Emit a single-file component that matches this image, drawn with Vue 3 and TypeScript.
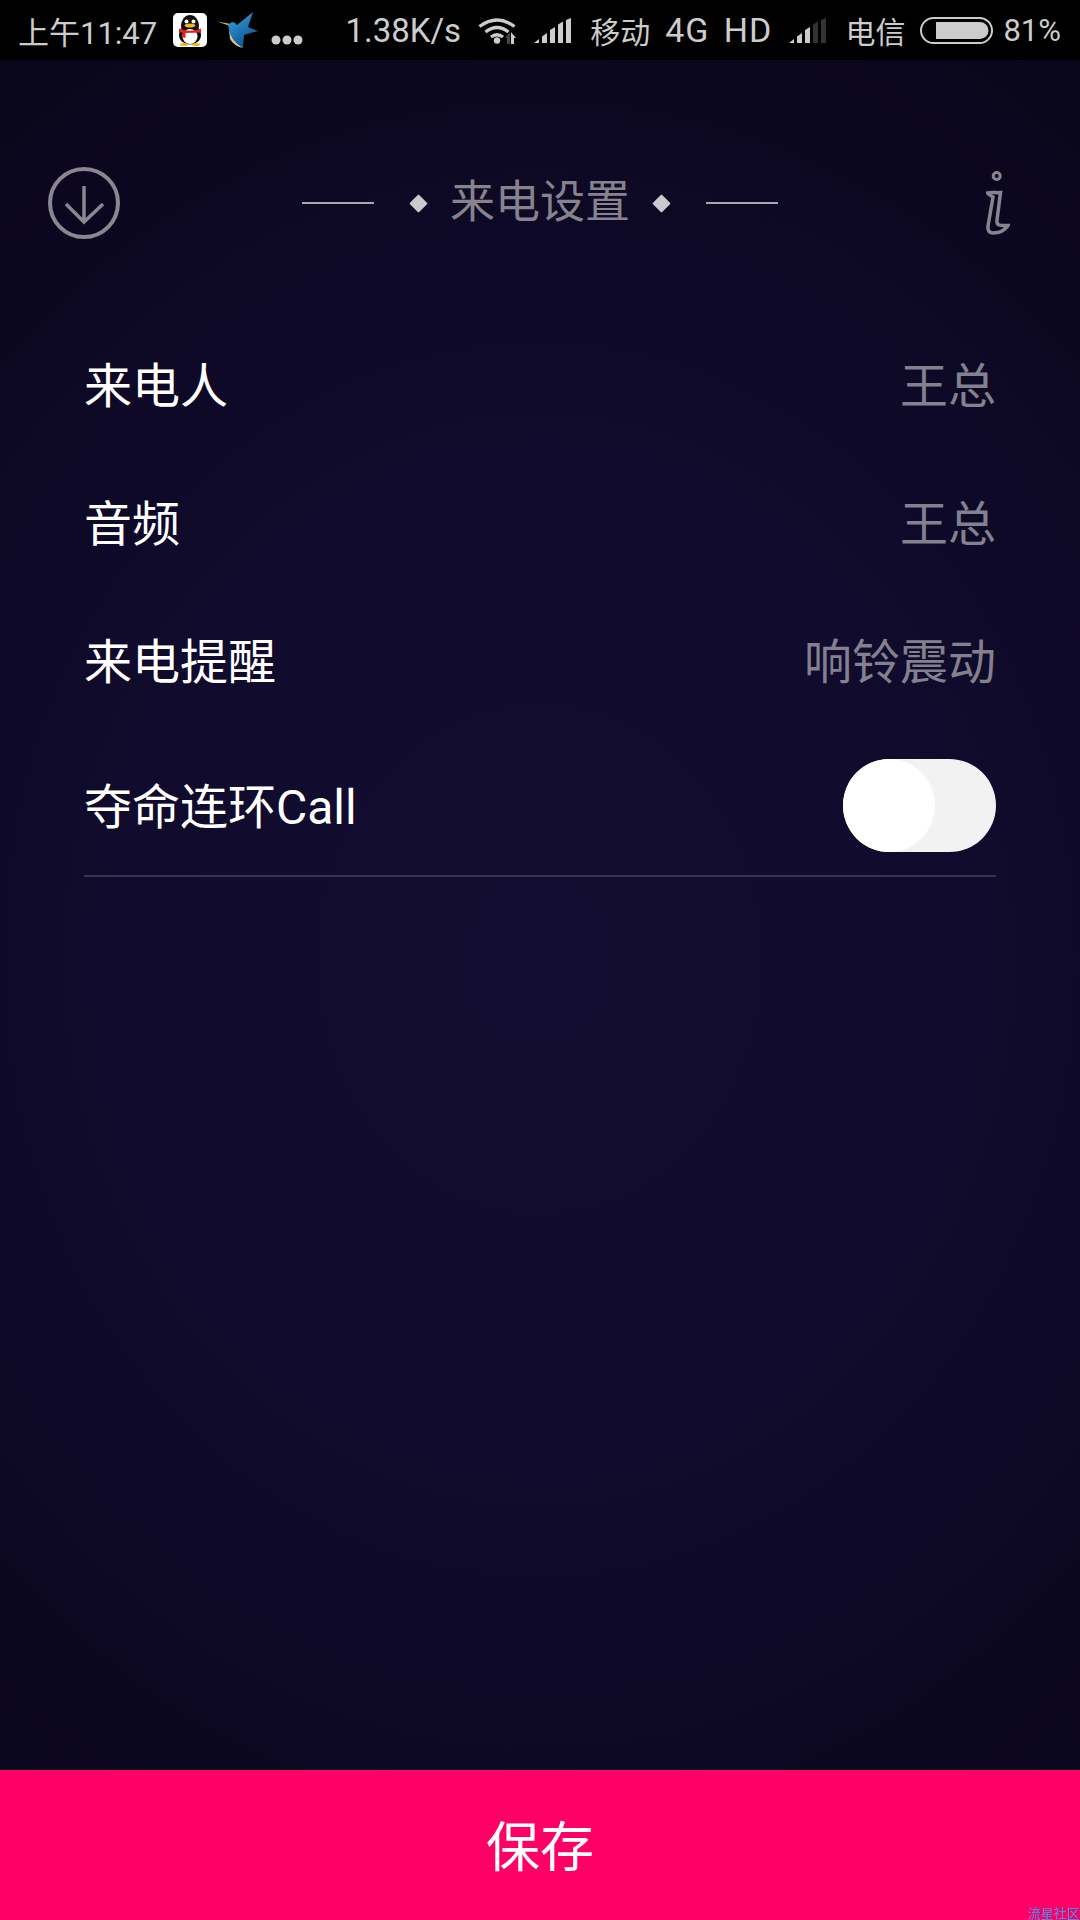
<template>
  <div class="page">
    <div class="status-bar">
      <div class="status-left">
        <span class="time">上午11:47</span>
        <svg class="qq" width="34" height="34" viewBox="0 0 34 34">
          <rect width="34" height="34" rx="5" fill="#fff" />
          <ellipse cx="17" cy="13" rx="9" ry="11" fill="#0c0c0c" />
          <ellipse cx="17" cy="22" rx="11" ry="9.5" fill="#0c0c0c" />
          <ellipse cx="17" cy="23.5" rx="7.5" ry="7.5" fill="#fff" />
          <circle cx="13.5" cy="8.5" r="2" fill="#fff" />
          <circle cx="20.5" cy="8.5" r="2" fill="#fff" />
          <ellipse cx="17" cy="12.5" rx="5.5" ry="2" fill="#f5b51c" />
          <path d="M6 15.5 Q17 20 28 15.5 L28 19.5 L12.5 20 L12.5 25 L8.5 24 L9.5 19.5 L6 19 Z" fill="#e8201f" />
          <ellipse cx="11" cy="31.5" rx="4" ry="1.5" fill="#f5b51c" />
          <ellipse cx="23" cy="31.5" rx="4" ry="1.5" fill="#f5b51c" />
        </svg>
        <svg class="bird" width="42" height="38" viewBox="0 0 42 38">
          <defs>
            <linearGradient id="birdBlue" x1="0" y1="0" x2="0.6" y2="1">
              <stop offset="0" stop-color="#39a6e8" />
              <stop offset="1" stop-color="#0c4f8c" />
            </linearGradient>
          </defs>
          <path d="M12 13 L15 11 Q18 11 20 14 L36 1 L31 16 L41 20 L27 24 L26 37 Q15 32 13 24 Q12 17 11 14.5 Z" fill="url(#birdBlue)" />
          <path d="M0 10.5 L12 12.5 L11.5 14.5 Z" fill="#c9a95a" />
          <path d="M12 19 Q14 30 26 37 Q17 35 13 28 Z" fill="#d8c98f" />
        </svg>
        <svg class="dots" width="32" height="10" viewBox="0 0 32 10">
          <circle cx="5" cy="5" r="4.5" fill="#ccc" />
          <circle cx="16" cy="5" r="4.5" fill="#ccc" />
          <circle cx="27" cy="5" r="4.5" fill="#ccc" />
        </svg>
      </div>
      <div class="status-right">
        <span class="speed">1.38K/s</span>
        <svg class="wifi" width="38" height="27" viewBox="0 0 38 27">
          <g fill="none" stroke="#ccc" stroke-width="3.4">
            <path d="M1.5 9.5 Q19 -3.5 36.5 9.5" />
            <path d="M7.5 15 Q19 6 30.5 15" />
            <path d="M13 20 Q19 15.5 25 20" />
          </g>
          <circle cx="19" cy="23.5" r="3.2" fill="#ccc" />
          <path d="M27 21 L32 15 L32 27 L29 27 L29 21 Z" fill="#444" />
          <path d="M33 15 L38 21 L36 21 L36 27 L33 27 Z" fill="#ccc" />
        </svg>
        <svg class="signal-a" width="37" height="25" viewBox="0 0 37 25">
          <path d="M0 25 L5 21 L5 25 Z M8 25 L8 18.5 L13 15 L13 25 Z M16 25 L16 12 L21 9 L21 25 Z M24 25 L24 6.5 L29 3.5 L29 25 Z M32 25 L32 2 L37 0 L37 25 Z" fill="#ccc" />
        </svg>
        <span class="carrier">移动</span>
        <span class="net">4G HD</span>
        <svg class="signal-b" width="37" height="25" viewBox="0 0 37 25">
          <path d="M0 25 L5 21 L5 25 Z M8 25 L8 18.5 L13 15 L13 25 Z M16 25 L16 12 L21 9 L21 25 Z" fill="#ccc" />
          <path d="M24 25 L24 6.5 L29 3.5 L29 25 Z M32 25 L32 2 L37 0 L37 25 Z" fill="#333" />
        </svg>
        <span class="carrier second">电信</span>
        <svg class="battery" width="73" height="27" viewBox="0 0 73 27">
          <rect x="1" y="1" width="71" height="25" rx="12.5" fill="none" stroke="#ccc" stroke-width="2" />
          <path d="M16 5 L60 5 A8.5 8.5 0 0 1 60 22 L16 22 Z" fill="#ccc" />
        </svg>
        <span class="percent">81%</span>
      </div>
    </div>

    <main class="content">
      <header class="head">
        <svg class="head-down" width="72" height="72" viewBox="0 0 72 72" fill="none" stroke="#8a8791">
          <circle cx="36" cy="36" r="34" stroke-width="4" />
          <path d="M36 19 L36 55 M18 37 L36 55 L55 37" stroke-width="3.5" />
        </svg>
        <div class="head-title">
          <span class="rule"></span>
          <span class="diamond"></span>
          <h1>来电设置</h1>
          <span class="diamond"></span>
          <span class="rule"></span>
        </div>
        <svg class="head-info" width="24" height="66" viewBox="0 0 24 66" fill="none" stroke="#87848f" stroke-width="3.5">
          <circle cx="10.7" cy="6" r="3.5" stroke-width="3" />
          <path d="M1.5 23 C6 22 10 23 14.5 22.5 L11 50 C10.5 55 12 56 22 55.5 C19 60 13 63 7 63 C3 63 1.5 60 2 56 L7 27 C5 26 3 25 1.5 23 Z" />
        </svg>
      </header>

      <ul class="settings">
        <li v-for="row in rows" :key="row.label" class="row">
          <span class="label">{{ row.label }}</span>
          <span class="value">{{ row.value }}</span>
        </li>
        <li class="row row-switch">
          <span class="label">夺命连环Call</span>
          <span class="switch"><span class="knob"></span></span>
        </li>
      </ul>
    </main>

    <button class="save">保存</button>
    <span class="watermark">流星社区</span>
  </div>
</template>

<script setup lang="ts">
interface Row {
  label: string
  value: string
}

const rows: Row[] = [
  { label: '来电人', value: '王总' },
  { label: '音频', value: '王总' },
  { label: '来电提醒', value: '响铃震动' }
]
</script>

<style>
html,
body {
  margin: 0;
  background: #000;
}
</style>

<style scoped>
.page {
  position: relative;
  width: 1080px;
  height: 1920px;
  display: flex;
  flex-direction: column;
  overflow: hidden;
  font-family: Roboto, "Noto Sans CJK SC", sans-serif;
  background: radial-gradient(ellipse 1000px 1150px at 50% 50%, #130d33 0%, #100a2b 50%, #090518 100%);
}

.status-bar {
  height: 60px;
  flex: none;
  background: #000;
  color: #ccc;
  font-size: 31px;
  display: flex;
  align-items: center;
  justify-content: space-between;
  padding: 0 19px 0 18px;
}

.status-left,
.status-right {
  display: flex;
  align-items: center;
}

.qq {
  margin-left: 16px;
}

.bird {
  margin-left: 10px;
}

.dots {
  margin-left: 12px;
  margin-top: 20px;
}

.speed {
  font-size: 33px;
}

.wifi {
  margin-left: 17px;
}

.signal-a {
  margin-left: 18px;
}

.carrier {
  margin-left: 19px;
  font-size: 30px;
}

.net {
  margin-left: 15px;
  font-size: 34px;
  letter-spacing: 1px;
  word-spacing: 5px;
}

.signal-b {
  margin-left: 17px;
}

.battery {
  margin-left: 15px;
}

.percent {
  margin-left: 10px;
}

.content {
  flex: 1;
}

.head {
  display: grid;
  grid-template-columns: 1fr auto 1fr;
  align-items: center;
  padding: 107px 48px 0;
}

.head-info {
  justify-self: end;
  margin-right: 22px;
}

.head-title {
  display: flex;
  align-items: center;
  color: #86838f;
}

.head-title h1 {
  margin: 0 25px;
  font-size: 45px;
  font-weight: 400;
  line-height: 72px;
}

.rule {
  width: 72px;
  height: 2px;
  background: #a9a6ad;
}

.diamond {
  width: 13px;
  height: 13px;
  background: #cbc9ce;
  border-radius: 1px;
  transform: rotate(45deg);
}

.rule:first-child {
  margin-right: 38px;
}

.rule:last-child {
  margin-left: 38px;
}

.settings {
  list-style: none;
  margin: 77px 0 0;
  padding: 0 84px;
}

.row {
  box-sizing: border-box;
  height: 138px;
  padding-bottom: 6px;
  display: flex;
  align-items: center;
  justify-content: space-between;
  font-size: 48px;
}

.label {
  color: #fff;
}

.value {
  color: #83808f;
}

.row-switch {
  height: auto;
  padding: 29px 0 23px;
  border-bottom: 2px solid #38334e;
}

.row-switch .label {
  margin-bottom: 6px;
}

.switch {
  width: 153px;
  height: 93px;
  border-radius: 47px;
  background: #f2f2f2;
  display: block;
}

.knob {
  display: block;
  width: 92px;
  height: 93px;
  border-radius: 50%;
  background: #fff;
}

.save {
  flex: none;
  height: 150px;
  border: none;
  padding: 0 0 4px;
  background: #ff0066;
  color: #fff;
  font-family: inherit;
  font-size: 54px;
}

.watermark {
  position: absolute;
  right: 0;
  bottom: 0;
  font-size: 13px;
  line-height: 13px;
  color: #3d8fe6;
}
</style>
